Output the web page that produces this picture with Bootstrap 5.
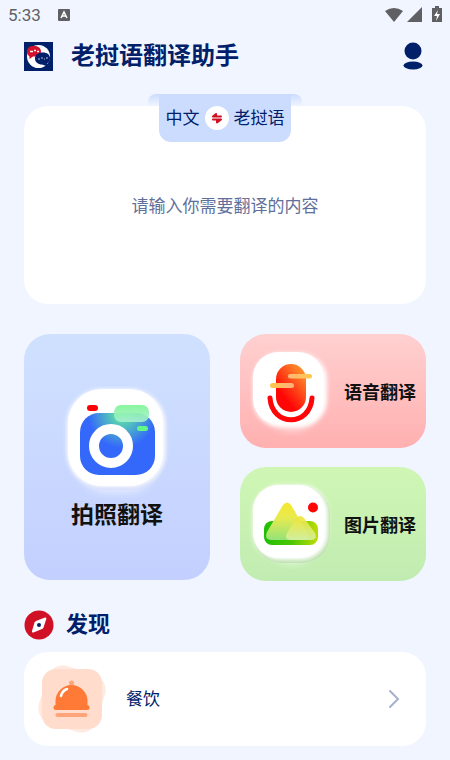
<!DOCTYPE html>
<html lang="zh-CN">
<head>
<meta charset="utf-8">
<meta name="viewport" content="width=device-width, initial-scale=1">
<title>老挝语翻译助手</title>
<link href="https://cdn.jsdelivr.net/npm/bootstrap@5.3.0/dist/css/bootstrap.min.css" rel="stylesheet">
<style>
:root { --navy: #00206a; }
body { background: #f0f5ff; color: var(--navy); font-family: Roboto, "Noto Sans CJK SC", sans-serif; font-size: 17px; line-height: 24px; }
svg { display: block; flex: none; }
.status-bar { height: 30px; padding: 0 8px; color: #5f6064; }
.app-header { height: 52px; gap: 18px; }
.app-title { font-size: 24px; line-height: 32px; font-weight: 700; }
.section-title { font-size: 22px; line-height: 30px; font-weight: 700; }
.panel { background: #fff; border-radius: 24px; }
.translate-panel { margin-top: 24px; }
.lang-switch { position: relative; height: 48px; width: 132px; gap: 5px; margin-top: -12px; background: #ccdcff; border-radius: 0 0 12px 12px; }
.lang-switch::before, .lang-switch::after { content: ""; position: absolute; top: 0; width: 11px; height: 12px; background: linear-gradient(#ccdcff, #f0f5ff); }
.lang-switch::before { right: 100%; border-radius: 8px 0 0 0; }
.lang-switch::after { left: 100%; border-radius: 0 8px 0 0; }
.lang-switch .btn { color: var(--navy); font-size: 17px; line-height: 24px; white-space: nowrap; }
.lang-switch .swap-btn { width: 24px; height: 24px; background: #fff; }
.source-text { height: 162px; padding: 52px 24px 24px; resize: none; font-size: 17px; line-height: 24px; border-radius: 24px; color: var(--navy); }
.source-text::placeholder { color: #61709b; }
.tiles { --bs-gutter-x: 30px; margin-top: 30px; }
.tile { border-radius: 26px; border: 0; color: #111; font-family: "Noto Sans CJK SC", sans-serif; font-weight: 700; }
.tile-photo { background: linear-gradient(#d0e1ff, #c3d0ff); font-size: 23px; line-height: 30px; height: 246px; }
.tile-side { height: 114px; font-size: 18px; line-height: 26px; padding: 0 10px 0 9px; }
.tile-voice { background: linear-gradient(#ffd0d0, #ffb0b0); }
.tile-image { background: linear-gradient(#cff6b4, #c1ecb1); }
.tile-stack { gap: 19px; }
.discover-head { margin-top: 29px; margin-bottom: 12px; }
.discover-item { height: 94px; gap: 18px; padding: 0 24px 0 12px; color: var(--navy); }
</style>
<script src="https://cdn.jsdelivr.net/npm/bootstrap@5.3.0/dist/js/bootstrap.bundle.min.js"></script>
</head>
<body>
<div class="status-bar d-flex align-items-center justify-content-between">
  <div class="d-flex align-items-center gap-3">
    <span>5:33</span>
    <svg width="14" height="14" viewBox="0 0 14 14" aria-hidden="true"><rect x="1" y="1" width="12" height="12" rx="1" fill="#5f6064"/><path d="M4 10 7 4l3 6M5 8h4" fill="none" stroke="#fff" stroke-width="1.5"/></svg>
  </div>
  <svg width="58" height="18" viewBox="0 0 58 18" aria-hidden="true" fill="#606064">
    <path d="M1 5Q10-1 19 5L10 16Z"/><path d="M38 1V16H23Z"/><path d="M51 0h4v2h3v14H48V2h3Z"/><path d="m54 4-4 6h3l-1 5 4-7h-3Z" fill="#fff"/>
  </svg>
</div>

<div class="px-4">
  <header class="app-header d-flex align-items-center">
    <svg width="29" height="29" viewBox="0 0 29 29" aria-hidden="true">
      <path fill="#00206a" d="M0 0h29v29H0z"/><circle cx="14.500" cy="14.500" r="11.500" fill="#fff"/>
      <path d="M10 4C5 4 3 6 3 9.500c0 2 1 4 2.500 5V17l3.500-2.500c5 0 8-2 8-5S15 4 10 4Z" fill="#d4112b"/>
      <path d="M19 10.500c-5 0-8 2.500-8 6s3 6 7 6l5.500 2-.5-3c2-1 3-3 3-5 0-4-3-6-7-6Z" fill="#00206a"/>
      <path d="M6 9.500h3m1-1h2m1 1h2" stroke="#fff" stroke-width="1.500"/><path d="M14 17h2m1-1h2m1 1h1m1-1h2" stroke="#aab9dc"/>
    </svg>
    <h1 class="app-title mb-0 flex-grow-1">老挝语翻译助手</h1>
    <button type="button" class="btn p-0 border-0" aria-label="我的">
      <svg width="30" height="28" viewBox="0 0 30 28" fill="#00206a"><circle cx="17" cy="9" r="8.500"/><ellipse cx="17" cy="23.500" rx="9.500" ry="4"/></svg>
    </button>
  </header>

  <main>
    <section class="panel translate-panel d-flex flex-column align-items-center">
      <div class="lang-switch d-flex align-items-center justify-content-center">
        <button type="button" class="btn p-0 border-0">中文</button>
        <button type="button" class="btn swap-btn p-0 border-0 rounded-circle d-flex align-items-center justify-content-center" aria-label="交换语言">
          <svg width="12" height="12" viewBox="0 0 12 12" fill="none" stroke="#d01020" stroke-width="2" stroke-linecap="round" stroke-linejoin="round"><path d="M2 4.500h8M2 4.500 5 2v2M2 7.500h8M10 7.500 6 10.500V8"/></svg>
        </button>
        <button type="button" class="btn p-0 border-0">老挝语</button>
      </div>
      <textarea class="source-text form-control border-0 bg-transparent shadow-none text-center" aria-label="翻译内容" placeholder="请输入你需要翻译的内容"></textarea>
    </section>

    <section class="row tiles">
      <div class="col-6">
        <button type="button" class="tile tile-photo w-100 p-0 d-flex flex-column align-items-center justify-content-center">
          <svg width="112" height="112" viewBox="0 0 112 112" aria-hidden="true">
            <defs>
              <filter id="soft" x="-20%" y="-20%" width="140%" height="140%"><feGaussianBlur stdDeviation="2"/></filter>
              <filter id="glow" x="-40%" y="-40%" width="180%" height="180%"><feGaussianBlur stdDeviation="5"/></filter>
              <radialGradient id="camera" gradientUnits="userSpaceOnUse" cx="61" cy="28" r="34"><stop stop-color="#62f39a"/><stop offset="1" stop-color="#3468fb"/></radialGradient>
              <linearGradient id="flash" x2="0" y2="1"><stop stop-color="#7cf592"/><stop offset="1" stop-color="#a9efd3"/></linearGradient>
              <linearGradient id="mic" x1="1" x2=".4" y2=".8"><stop stop-color="#ffac35"/><stop offset="1" stop-color="#ff0505"/></linearGradient>
              <linearGradient id="bar"><stop stop-color="#ffc847"/><stop offset="1" stop-color="#ffad83"/></linearGradient>
              <linearGradient id="bar2"><stop stop-color="#ffb779"/><stop offset="1" stop-color="#ffc94b"/></linearGradient>
              <linearGradient id="ground"><stop stop-color="#20bd08"/><stop offset=".5" stop-color="#4ac705"/><stop offset="1" stop-color="#bfdc05"/></linearGradient>
              <linearGradient id="peak" x2="0" y2="1"><stop stop-color="#f5e82d"/><stop offset=".4" stop-color="#e9ea50"/><stop offset="1" stop-color="#94e378"/></linearGradient>
              <linearGradient id="peak2" x2="0" y2="1"><stop stop-color="#f0e52e"/><stop offset="1" stop-color="#d7f0a5"/></linearGradient>
            </defs>
            <rect x="18" y="22" width="76" height="84" rx="28" fill="#fff" opacity=".6" filter="url(#glow)"/>
            <rect x="6" y="3" width="100" height="101" rx="36" fill="#d3dcfa"/>
            <rect x="6" y="3" width="98" height="98" rx="35" fill="#fff" filter="url(#soft)"/>
            <rect x="7" y="3" width="95" height="97" rx="34" fill="#fff"/>
            <rect x="19" y="27" width="75" height="62" rx="19" fill="url(#camera)"/>
            <circle cx="50" cy="60" r="17" fill="none" stroke="#fff" stroke-width="10"/>
            <rect x="26" y="19" width="11" height="6" rx="3" fill="#fa0000"/>
            <rect x="53" y="19" width="35" height="17" rx="7" fill="url(#flash)" opacity=".9"/>
            <rect x="76" y="40" width="11" height="5" rx="2.500" fill="#62f788"/>
          </svg>
          <span>拍照翻译</span>
        </button>
      </div>
      <div class="col-6 d-flex flex-column tile-stack">
        <button type="button" class="tile tile-side tile-voice w-100 d-flex align-items-center justify-content-between">
          <svg width="86" height="90" viewBox="0 0 86 90" aria-hidden="true">
            <rect x="18" y="24" width="50" height="60" rx="24" fill="#fff" opacity=".6" filter="url(#glow)"/>
            <rect x="4" y="7" width="74" height="74" rx="27" fill="#fff" filter="url(#soft)"/>
            <rect x="4" y="6" width="70" height="72" rx="25" fill="#fff"/>
            <path d="M21 52c2 29 40 29 42 0" fill="none" stroke="#ff0508" stroke-width="5" stroke-linecap="round"/>
            <rect x="27" y="18" width="30" height="48" rx="15" fill="url(#mic)"/>
            <rect x="39" y="28" width="24" height="4.500" rx="2" fill="url(#bar2)"/>
            <rect x="21" y="37" width="24" height="5" rx="2.500" fill="url(#bar)"/>
          </svg>
          <span>语音翻译</span>
        </button>
        <button type="button" class="tile tile-side tile-image w-100 d-flex align-items-center justify-content-between">
          <svg width="86" height="90" viewBox="0 0 86 90" aria-hidden="true">
            <rect x="18" y="24" width="50" height="60" rx="24" fill="#fff" opacity=".6" filter="url(#glow)"/>
            <rect x="4" y="7" width="77" height="77" rx="28" fill="#b9dfaa"/>
            <rect x="4" y="6" width="75" height="75" rx="27" fill="#fff" filter="url(#soft)"/>
            <rect x="4" y="6" width="71" height="73" rx="25" fill="#fff"/>
            <rect x="15" y="42" width="54" height="24" rx="8" fill="url(#ground)"/>
            <path d="M34 26q4-5 8 0l16 27q3 8-4 8H22q-7-1-4-8Z" fill="url(#peak)"/>
            <path d="M47 39q4-4 8 0l11 15q3 7-4 7H41q-6-1-3-7Z" fill="url(#peak2)" opacity=".9"/>
            <circle cx="64" cy="28.500" r="5" fill="#ff0504"/>
          </svg>
          <span>图片翻译</span>
        </button>
      </div>
    </section>

    <section class="pb-3">
      <div class="discover-head d-flex align-items-center gap-2">
        <svg width="30" height="30" viewBox="0 0 30 30" aria-hidden="true"><circle cx="15" cy="15" r="14.500" fill="#d01024"/><path d="M21 7.500 12 11q-1 .5-1.500 1.500L8 21q-.3 2 1.500 1.500L18 19q1-.5 1.500-1.500L22.300 9q.2-2-1.300-1.500Z" fill="#fff"/><circle cx="15" cy="15" r="2" fill="#00206a"/></svg>
        <h2 class="section-title mb-0 ms-1">发现</h2>
      </div>
      <a href="#dining" class="panel discover-item d-flex align-items-center text-decoration-none">
        <svg width="72" height="72" viewBox="0 0 72 72" aria-hidden="true">
          <rect x="6" y="6" width="60" height="60" rx="16" fill="#ffeae2" transform="rotate(18 36 36)"/>
          <rect x="6" y="6" width="60" height="60" rx="14" fill="#ffdccc"/>
          <circle cx="35.500" cy="20" r="2.500" fill="#ffa57c"/>
          <path d="M19.500 42V38a16 16 0 0 1 32 0v4Z" fill="#ff7a36"/>
          <rect x="17.500" y="42" width="36" height="5" rx="2.500" fill="#ff7a36"/>
          <rect x="19.500" y="50" width="32" height="4" rx="2" fill="#ffa57c"/>
          <path d="M25 33q1-5 6-7" fill="none" stroke="#fff" stroke-width="2.500" stroke-linecap="round"/>
        </svg>
        <span class="flex-grow-1">餐饮</span>
        <svg width="16" height="20" viewBox="0 0 16 20" fill="none" stroke="#a5b1cd" stroke-width="2" stroke-linecap="round" aria-hidden="true"><path d="m4 2 8 8-8 8"/></svg>
      </a>
    </section>
  </main>
</div>
</body>
</html>
